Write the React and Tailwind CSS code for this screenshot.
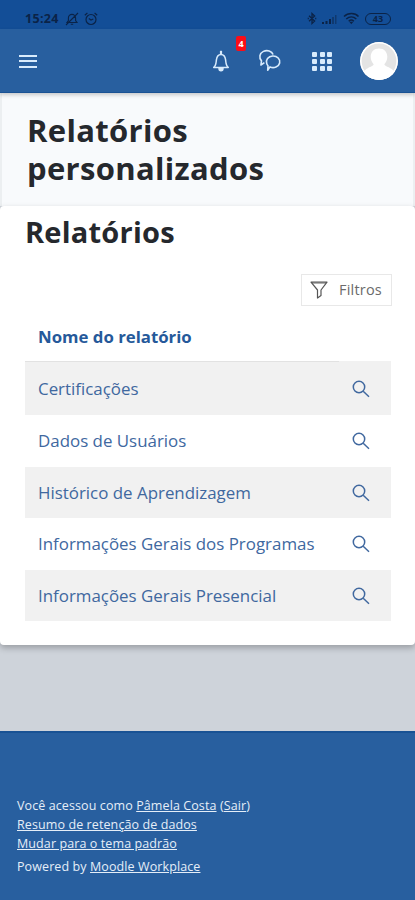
import React from 'react';

const reports = [
  'Certificações',
  'Dados de Usuários',
  'Histórico de Aprendizagem',
  'Informações Gerais dos Programas',
  'Informações Gerais Presencial',
];

const StatusBar = () => (
  <div className="flex h-[29px] items-center bg-[#134e97] pt-2 pl-[25px] pr-6 text-[#0b2347]">
    <span className="w-[35px] text-[12.5px] leading-4 font-bold tracking-[0.3px] whitespace-nowrap">15:24</span>
    {/* Muted bell */}
    <svg className="ml-[5px] h-[14px] w-[14px]" viewBox="0 0 14 14" fill="none" stroke="currentColor" strokeWidth="1.1">
      <path d="M2 10.5h10l-1.4-2V6a3.6 3.6 0 0 0-7.2 0v2.5zM5.8 12.3h2.4M1 13 13 1" />
    </svg>
    {/* Alarm clock */}
    <svg className="ml-[5px] h-[14px] w-[14px]" viewBox="0 0 14 14" fill="none" stroke="currentColor" strokeWidth="1.2">
      <circle cx="7" cy="7.5" r="5" />
      <path d="M.8 3.2 3.4 1M13.2 3.2 10.6 1M4.8 6.5 7 8l2.3-1" />
    </svg>
    <svg className="ml-auto h-[13px] w-[10px]" viewBox="0 0 10 14" fill="none" stroke="currentColor" strokeWidth="1.4">
      <path d="m1.8 4 6 5.6L5 12.3V1.7l2.8 2.7-6 5.6M.4 7h1.2M8.4 7h1.2" />
    </svg>
    {/* Signal strength */}
    <svg className="ml-[4px] h-[12px] w-[16px]" viewBox="0 0 16 12" fill="currentColor">
      <path d="M1 9h2v2H1zM4.5 8h2v3h-2zM8 6h2v5H8z" />
      <path opacity=".5" d="M11 4h2v7h-2zM14 2h1.5v9H14z" />
    </svg>
    <svg className="ml-[6px] h-[13px] w-[17px]" viewBox="0 0 17 13" fill="none" stroke="currentColor" strokeWidth="1.5">
      <path d="M1 4.5c4-4 11-4 14.5 0M3.3 7c3-2.8 7-2.8 10 0M5.7 9.2c1.6-1.4 3.6-1.4 5.2 0" />
      <path fill="currentColor" stroke="none" d="m6.3 9.7 2 2.5 2-2.5z" />
    </svg>
    <span className="ml-[5px] flex h-[12px] w-[26px] items-center justify-center rounded-full border border-current text-[9px] leading-none font-bold">
      43
    </span>
  </div>
);

const NavBar = () => (
  <nav className="relative z-10 flex h-16 items-center border-b border-[#1a5294] bg-[#285f9f] pt-px pl-[19px] pr-[17px] text-[#d8ebfc] shadow-[0_2px_4px_rgba(0,0,0,0.2)]">
    <button type="button" aria-label="Menu" className="flex w-[18px] flex-col gap-[3.5px]">
      <span className="h-[2px] bg-current" />
      <span className="h-[2px] bg-current" />
      <span className="h-[2px] bg-current" />
    </button>

    <button type="button" aria-label="Notificações" className="relative ml-auto">
      <svg className="h-[22px] w-[18px]" viewBox="0 0 18 22" fill="none" stroke="currentColor" strokeWidth="1.5" strokeLinejoin="round">
        <path d="M1.7 17.4c2.4-1.6 2.3-4.2 2.7-7.5.4-3.5 1.6-5.5 4.6-5.5s4.2 2 4.6 5.5c.4 3.3.3 5.900 2.7 7.500z" />
        <path d="M9 4V.8" strokeWidth="2.2" />
        <path d="M7 18.3a2 2.5 0 0 0 4 0z" fill="currentColor" />
      </svg>
      <span className="absolute -top-[14px] left-[24px] flex h-[15px] w-[10px] items-center justify-center rounded-[2px] bg-[#fb0d17] text-[9px] font-bold text-white">
        4
      </span>
    </button>

    <button type="button" aria-label="Mensagens" className="ml-[28px]">
      <svg className="h-[24px] w-[24px]" viewBox="0 0 24 24" fill="none" stroke="currentColor" strokeWidth="1.6" strokeLinejoin="round">
        <path d="M12 17.9a6.7 5.8 0 1 0-3.2-3.2c.3.8.7 1.500 1.200 2l-.3 4.500z" />
        <path d="M6.4 13.600 2.900 16l.6-4.100C.7 8.700 1.500 4.300 5.400 2.400c3.800-1.800 8.400-.4 9.700 3.200" />
      </svg>
    </button>

    <button type="button" aria-label="Aplicativos" className="ml-[30px] grid grid-cols-3 gap-x-[2.5px] gap-y-[2px]">
      {Array.from({ length: 9 }, (_, i) => (
        <span key={i} className="h-[5px] w-[5px] rounded-[1px] bg-current" />
      ))}
    </button>

    <svg className="ml-[28px] h-[38px] w-[38px] rounded-full" viewBox="0 0 38 38">
      <rect width="38" height="38" fill="#e4e4e4" />
      <path fill="#fff" d="M19 6.5c5 0 8.3 3.5 8.3 8.3 0 3-1.3 5.7-3 7.4 1 2.8 7.5 3.1 10 7.3V38H4v-8.5c2.2-4.2 8.7-4.5 9.7-7.3-1.7-1.7-3-4.4-3-7.4 0-4.8 3.3-8.3 8.3-8.3z" />
      <circle cx="19" cy="19" r="18.2" fill="none" stroke="#fff" strokeWidth="1.6" />
    </svg>
  </nav>
);

const SearchIcon = () => (
  <svg className="h-[18px] w-[18px]" viewBox="0 0 18 18" fill="none" stroke="currentColor" strokeWidth="1.5">
    <circle cx="7" cy="7" r="5.7" />
    <path d="m11.2 11.2 5.8 5.6" />
  </svg>
);

const App = () => {
  return (
    <div className="flex h-[900px] w-full flex-col overflow-hidden bg-[#ced3da] font-['Open_Sans','Noto_Sans',sans-serif]">
      <StatusBar />
      <NavBar />

      <header className="h-[113px] border-x-2 border-[#eceff1] bg-[#f8fafc] pt-[18px] pl-[25px]">
        <h1 className="text-[31px] leading-[38px] font-bold tracking-[0.33px] text-[#25282d]">
          <span className="block w-fit">Relatórios</span>
          <span className="block w-fit">personalizados</span>
        </h1>
      </header>

      <main className="h-[439px] rounded-[4px] bg-white pt-[7px] pr-6 pl-[25px] shadow-[0_3px_6px_rgba(0,0,0,0.25)]">
        <h2 className="text-[29px] leading-[38px] font-bold tracking-[0.22px] text-[#25282d]">Relatórios</h2>

        <div className="mt-[23px] -mr-px flex justify-end">
          <button
            type="button"
            className="flex h-[32px] w-[91px] items-center border border-[#e8e8e8] pl-2 text-[14.5px] tracking-[0.2px] text-[#6b6b6b]"
          >
            <svg className="mr-[11px] h-[18px] w-[18px] shrink-0" viewBox="0 0 18 18" fill="none" stroke="#555" strokeWidth="1.2" strokeLinejoin="round">
              <path d="M1 1.2h16L11 9v5.5L7.5 17V9z" />
              <path d="M2 2.3h14" opacity=".5" />
            </svg>
            Filtros
          </button>
        </div>

        <table className="mt-[5px] w-full table-fixed border-collapse">
          <thead>
            <tr className="h-[50px]">
              <th className="border-b border-[#e2e2e2] pt-px pl-[13px] text-left text-[16.8px] font-bold text-[#25599a]">
                Nome do relatório
              </th>
              <th className="w-[52px]" />
            </tr>
          </thead>
          <tbody>
            {reports.map((name) => (
              <tr key={name} className="h-[51.5px] text-[#40689f] first:h-[54px] odd:bg-[#f1f1f1]">
                <td className="pl-[13px] text-[16.9px] whitespace-nowrap">{name}</td>
                <td className="pt-px pl-[13px]">
                  <SearchIcon />
                </td>
              </tr>
            ))}
          </tbody>
        </table>
      </main>

      <footer className="mt-[86px] flex-1 border-t-2 border-[#195294] bg-[#285f9f] pt-[63px] pl-[17px] text-[12.5px] leading-[19px] tracking-[0.1px] text-[#e5eef8]">
        <p>
          Você acessou como <a href="#" className="underline">Pâmela Costa</a> (<a href="#" className="underline">Sair</a>)
        </p>
        <p><a href="#" className="underline">Resumo de retenção de dados</a></p>
        <p><a href="#" className="underline">Mudar para o tema padrão</a></p>
        <p className="mt-1">
          Powered by <a href="#" className="underline">Moodle Workplace</a>
        </p>
      </footer>
    </div>
  );
};

export default App;
